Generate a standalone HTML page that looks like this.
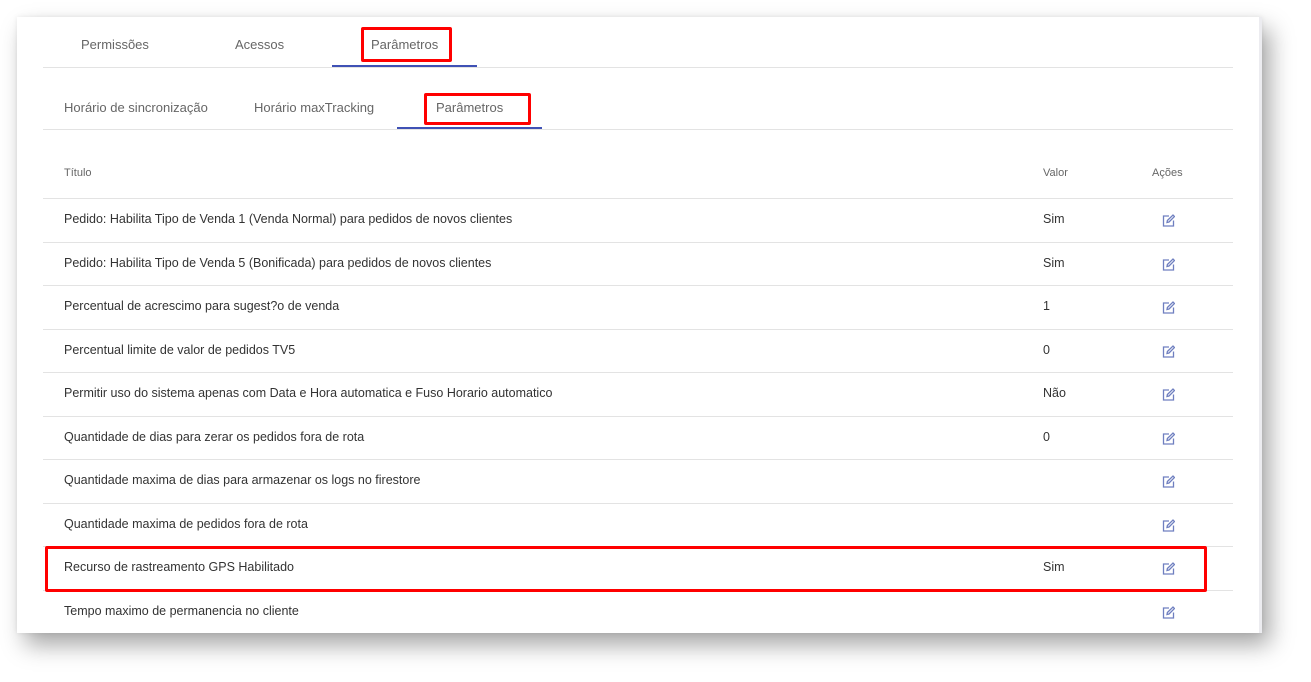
<!DOCTYPE html>
<html><head><style>
*{margin:0;padding:0;box-sizing:border-box}
body{width:1311px;height:682px;background:#fff;font-family:"Liberation Sans",sans-serif;position:relative;overflow:hidden}
.panel{position:absolute;left:17px;top:17px;width:1245px;height:616px;background:#fff;box-shadow:8px 12px 22px rgba(0,0,0,.35),0 0 5px rgba(0,0,0,.08);border-right:3px solid #ececf0}
.t{position:absolute;font-size:13px;color:#666;white-space:nowrap}
.line{position:absolute;height:1px;background:#e3e3e3;left:43px;width:1190px}
.ul{position:absolute;height:2px;background:#3f51b5}
.red{position:absolute;border:3px solid #f00;border-radius:2px}
.r{position:absolute;font-size:12.5px;color:#333;white-space:nowrap}
.ic{position:absolute;width:13px;height:13px}
</style></head><body>
<div class="panel"></div>
<div class="t" style="left:81px;top:37px">Permissões</div>
<div class="t" style="left:235px;top:37px">Acessos</div>
<div class="t" style="left:371px;top:37px">Parâmetros</div>
<div class="line" style="top:67px"></div>
<div class="ul" style="left:332px;top:65px;width:145px"></div>
<div class="red" style="left:361px;top:27px;width:91px;height:35px"></div>
<div class="t" style="left:64px;top:100px">Horário de sincronização</div>
<div class="t" style="left:254px;top:100px">Horário maxTracking</div>
<div class="t" style="left:436px;top:100px">Parâmetros</div>
<div class="line" style="top:129px"></div>
<div class="ul" style="left:397px;top:127px;width:145px"></div>
<div class="red" style="left:424px;top:93px;width:107px;height:32px"></div>
<div class="t" style="left:64px;top:167px;font-size:11px">Título</div>
<div class="t" style="left:1043px;top:167px;font-size:11px">Valor</div>
<div class="t" style="left:1152px;top:167px;font-size:11px">Ações</div>
<div id="rows"></div>
<div class="red" style="left:45px;top:546px;width:1162px;height:46px"></div>
<script>
var d=[["Pedido: Habilita Tipo de Venda 1 (Venda Normal) para pedidos de novos clientes","Sim"],["Pedido: Habilita Tipo de Venda 5 (Bonificada) para pedidos de novos clientes","Sim"],["Percentual de acrescimo para sugest?o de venda","1"],["Percentual limite de valor de pedidos TV5","0"],["Permitir uso do sistema apenas com Data e Hora automatica e Fuso Horario automatico","Não"],["Quantidade de dias para zerar os pedidos fora de rota","0"],["Quantidade maxima de dias para armazenar os logs no firestore",""],["Quantidade maxima de pedidos fora de rota",""],["Recurso de rastreamento GPS Habilitado","Sim"],["Tempo maximo de permanencia no cliente",""]];
var h="";
for(var i=0;i<d.length;i++){var y=198+i*43.5;
h+='<div class="line" style="top:'+y+'px"></div>';
h+='<div class="r" style="left:64px;top:'+(y+14)+'px">'+d[i][0]+'</div>';
h+='<div class="r" style="left:1043px;top:'+(y+14)+'px">'+d[i][1]+'</div>';
h+='<svg class="ic" style="left:1162px;top:'+(y+16)+'px" viewBox="0 0 13 13" fill="none" stroke="#6f7fc0" stroke-width="1.3"><path d="M7 2H1.5v10h10V6.5"/><path d="M5 8.5l.4-2L11 1l1.5 1.5L7 8z"/></svg>';}
document.getElementById("rows").innerHTML=h;
</script>
</body></html>
